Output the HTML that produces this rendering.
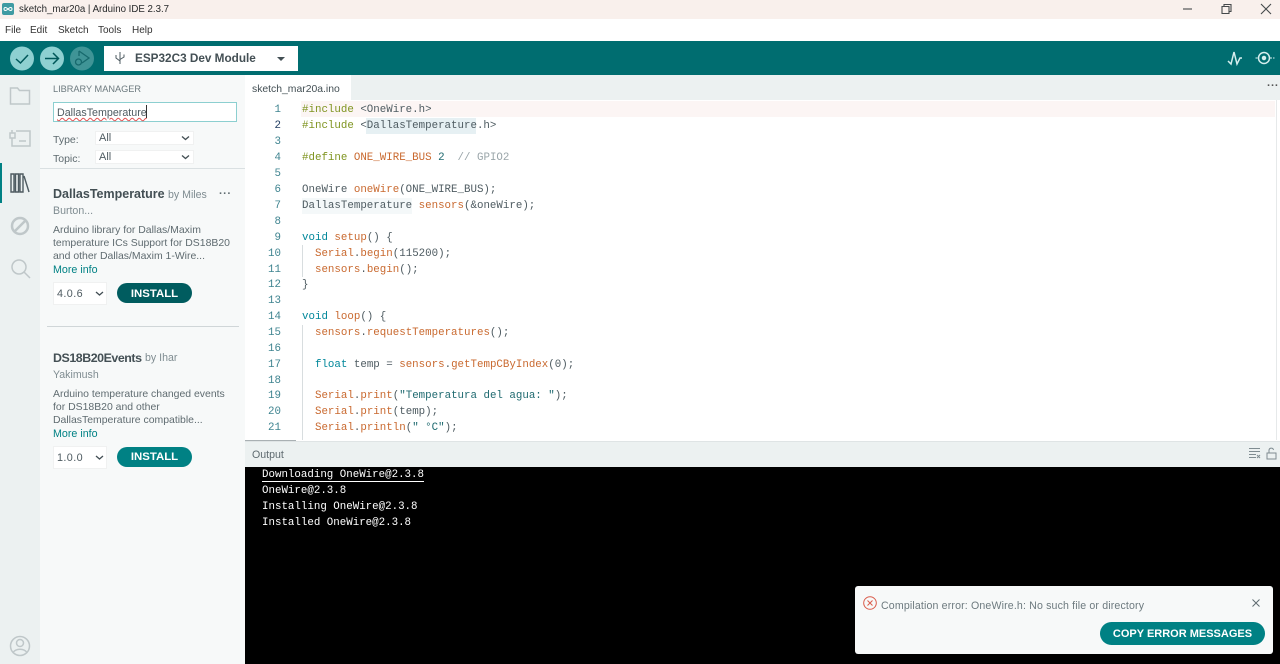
<!DOCTYPE html>
<html><head><meta charset="utf-8"><style>
*{box-sizing:border-box}
html,body{margin:0;padding:0;width:1280px;height:664px;overflow:hidden;background:#fff;font-family:"Liberation Sans",sans-serif}
.a{position:absolute;white-space:nowrap}
.code{position:absolute;left:302px;margin-top:1px;font:10.8px/16px "Liberation Mono",monospace;color:#4e5b61;white-space:pre;height:16px}
.ln{position:absolute;left:250px;margin-top:1px;width:31px;text-align:right;font:10.8px/16px "Liberation Mono",monospace;color:#3f8490;height:16px}
.o{color:#c9692f}.g{color:#7f9420}.t{color:#00879a}.m{color:#5f6f75}.q{color:#1f6a70}
.out{position:absolute;left:262px;margin-top:1px;font:10.8px/16px "Liberation Mono",monospace;color:#fff;white-space:pre}
.sel{position:absolute;background:#fff;border:1px solid #f0f1f1;font-size:11px;color:#4e5b61;padding-left:3px}
.btn{position:absolute;background:#008184;color:#fff;font-weight:bold;text-align:center;border-radius:12px}
.desc{font-size:10.45px;line-height:13.4px;color:#5f6b70}
</style></head><body>
<!-- title -->
<div class="a" style="left:0;top:0;width:1280px;height:19px;background:#f9f0ec"></div>
<svg class="a" style="left:2px;top:3px" width="12" height="12"><rect width="12" height="12" rx="2" fill="#3f9ba3"/><path d="M3.5 4.5a1.5 1.5 0 100 3c1.500 0 3.500-3 5-3a1.500 1.500 0 110 3c-1.500 0-3.500-3-5-3z" fill="none" stroke="#fff"/></svg>
<div class="a" style="left:19px;top:3px;font-size:9.700px;line-height:13px;color:#27292a">sketch_mar20a | Arduino IDE 2.3.7</div>
<svg class="a" style="left:1160px;top:0" width="120" height="19" fill="none" stroke="#45494b" stroke-width="1.100"><path d="M23 9h9"/><path d="M62 6.500h7v7h-7zM64 6.500V4.500h7v7h-2"/><path d="M101 4l10 10M111 4l-10 10"/></svg>
<!-- menu -->
<div class="a" style="left:5px;top:24px;font-size:10px;line-height:13px;color:#333">File</div>
<div class="a" style="left:30px;top:24px;font-size:10px;line-height:13px;color:#333">Edit</div>
<div class="a" style="left:58px;top:24px;font-size:10px;line-height:13px;color:#333">Sketch</div>
<div class="a" style="left:98px;top:24px;font-size:10px;line-height:13px;color:#333">Tools</div>
<div class="a" style="left:132px;top:24px;font-size:10px;line-height:13px;color:#333">Help</div>
<!-- toolbar -->
<div class="a" style="left:0;top:41px;width:1280px;height:34px;background:#006d70"></div>
<svg class="a" style="left:0;top:41px" width="110" height="34">
<circle cx="22" cy="17.500" r="12" fill="#8ed0d1"/><path d="M16 18l4.500 4 7.500-8" fill="none" stroke="#00575a" stroke-width="1.500"/>
<circle cx="52" cy="17.500" r="12" fill="#8ed0d1"/><path d="M45 17.500h13M53 12l5.500 5.500-5.500 5.500" fill="none" stroke="#00575a" stroke-width="1.500"/>
<circle cx="82" cy="17.500" r="12" fill="#3f9496"/><path d="M79 10l10 7-7 5M79 10v5" fill="none" stroke="#17696d" stroke-width="1.300"/><circle cx="78.500" cy="21" r="3" fill="none" stroke="#17696d" stroke-width="1.300"/>
</svg>
<div class="a" style="left:104px;top:46px;width:194px;height:25px;background:#fff"></div>
<svg class="a" style="left:113px;top:51px" width="14" height="15" fill="none" stroke="#4e5b61" stroke-width="1"><path d="M7 1v12M3 4v3l4 3M11 3.500v2.500l-4 2.500"/></svg>
<div class="a" style="left:135px;top:51px;font-size:11.750px;line-height:15px;font-weight:bold;color:#434f54">ESP32C3 Dev Module</div>
<div class="a" style="left:277px;top:57px;width:0;height:0;border-left:4px solid transparent;border-right:4px solid transparent;border-top:4px solid #434f54"></div>
<svg class="a" style="left:1225px;top:47px" width="50" height="22" fill="none" stroke="#d6eeee" stroke-width="1.500"><path d="M3 14l3 3 3-12 3 12 3-6h2"/><circle cx="39" cy="11" r="5.500"/><circle cx="39" cy="11" r="1.500" fill="#d6eeee"/><path d="M30.500 11h2M45 11h2M48 11h1.500" stroke-width="1"/></svg>
<!-- side rail -->
<div class="a" style="left:0;top:75px;width:40px;height:589px;background:#ecf1f1"></div>
<div class="a" style="left:0;top:163px;width:2px;height:40px;background:#008184"></div>
<svg class="a" style="left:0;top:75px" width="40" height="589" fill="none" stroke="#bfc7c9" stroke-width="1.500">
<path d="M10.500 29V13h7l2 2.500h10V29z"/>
<path d="M16 56h14v15H12v-8"/><path d="M12 55v3M10 58h5v5h-5z"/><path d="M19 66h7"/>
<g stroke="#4e5b61" stroke-width="1.400"><path d="M11 99h3v18h-3zM15.500 99h3v18h-3zM20 99h3v18h-3zM24 101l5 16"/></g>
<circle cx="20" cy="151" r="8" stroke-width="2.500"/><path d="M15 156l10-10" stroke-width="2.500"/>
<circle cx="19" cy="192" r="7"/><path d="M24 197l6 6"/>
<circle cx="20" cy="571" r="9.500"/><circle cx="20" cy="568" r="3.500"/><path d="M13 578c2-5 12-5 14 0"/>
</svg>
<!-- library panel -->
<div class="a" style="left:40px;top:75px;width:205px;height:589px;background:#f7f9f9"></div>
<div class="a" style="left:53px;top:83px;font-size:9.200px;line-height:12px;color:#6d7a7f">LIBRARY MANAGER</div>
<div class="a" style="left:53px;top:102px;width:184px;height:20px;background:#fff;border:1px solid #8ccfd0"></div>
<div class="a" style="left:57px;top:106px;font-size:10.700px;line-height:14px;color:#4e5b61;text-decoration:underline wavy #e05050 1px">DallasTemperature</div>
<div class="a" style="left:146px;top:105px;width:1px;height:13px;background:#333"></div>
<div class="a" style="left:53px;top:134px;font-size:10.500px;line-height:13px;color:#5f6b70">Type:</div>
<div class="a" style="left:53px;top:153px;font-size:10.500px;line-height:13px;color:#5f6b70">Topic:</div>
<div class="sel" style="left:95px;top:131px;width:99px;height:14px;line-height:13px">All</div>
<div class="sel" style="left:95px;top:150px;width:99px;height:14px;line-height:13px">All</div>
<svg class="a" style="left:180px;top:134px" width="12" height="30" fill="none" stroke="#434f54" stroke-width="1.300"><path d="M2 2.500l3.500 3 3.500-3M2 21.500l3.500 3 3.500-3"/></svg>
<div class="a" style="left:40px;top:168px;width:205px;height:1px;background:#dae0e2"></div>
<div class="a" style="left:53px;top:186px;font-size:12.500px;line-height:16px;font-weight:bold;color:#434f54">DallasTemperature</div>
<div class="a" style="left:168px;top:189px;font-size:10.600px;line-height:13px;color:#7f8c91">by Miles</div>
<div class="a" style="left:219px;top:188px;font-size:11px;line-height:13px;color:#5f6b70;font-weight:bold;letter-spacing:.5px">···</div>
<div class="a" style="left:53px;top:205px;font-size:10.600px;line-height:13px;color:#7f8c91">Burton...</div>
<div class="a desc" style="left:53px;top:223.500px">Arduino library for Dallas/Maxim<br>temperature ICs Support for DS18B20<br>and other Dallas/Maxim 1-Wire...</div>
<div class="a" style="left:53px;top:264px;font-size:10.700px;line-height:13px;color:#008184">More info</div>
<div class="sel" style="left:53px;top:282px;width:54px;height:23px;line-height:22px;padding-left:3px;font-size:10.800px;letter-spacing:.4px">4.0.6</div>
<svg class="a" style="left:94px;top:290px" width="12" height="8" fill="none" stroke="#434f54" stroke-width="1.300"><path d="M2 2l3.500 3 3.500-3"/></svg>
<div class="btn" style="left:117px;top:283px;width:75px;height:20px;line-height:20px;padding-top:1px;font-size:11.400px;background:#005c5f;border-radius:10px">INSTALL</div>
<div class="a" style="left:47px;top:326px;width:192px;height:1px;background:#d0d6d8"></div>
<div class="a" style="left:53px;top:350px;font-size:12.400px;line-height:16px;font-weight:bold;letter-spacing:-.45px;color:#434f54">DS18B20Events</div>
<div class="a" style="left:145px;top:352px;font-size:10.600px;line-height:13px;color:#7f8c91">by Ihar</div>
<div class="a" style="left:53px;top:369px;font-size:10.600px;line-height:13px;color:#7f8c91">Yakimush</div>
<div class="a desc" style="left:53px;top:387.500px">Arduino temperature changed events<br>for DS18B20 and other<br>DallasTemperature compatible...</div>
<div class="a" style="left:53px;top:428px;font-size:10.700px;line-height:13px;color:#008184">More info</div>
<div class="sel" style="left:53px;top:446px;width:54px;height:23px;line-height:22px;padding-left:3px;font-size:10.800px;letter-spacing:.4px">1.0.0</div>
<svg class="a" style="left:94px;top:454px" width="12" height="8" fill="none" stroke="#434f54" stroke-width="1.300"><path d="M2 2l3.500 3 3.500-3"/></svg>
<div class="btn" style="left:117px;top:447px;width:75px;height:20px;line-height:20px;font-size:11.400px;border-radius:10px">INSTALL</div>
<!-- tab bar -->
<div class="a" style="left:245px;top:75px;width:1035px;height:25px;background:#ecf1f1"></div>
<div class="a" style="left:245px;top:75px;width:106px;height:25px;background:#fff"></div>
<div class="a" style="left:252px;top:83px;font-size:10.400px;line-height:13px;color:#434f54">sketch_mar20a.ino</div>
<div class="a" style="left:1267px;top:81px;font-size:11px;line-height:11px;color:#555;font-weight:bold;letter-spacing:.3px">···</div>
<!-- editor -->
<div class="a" style="left:301px;top:101px;width:974px;height:16px;background:#fcf5f4"></div>
<div class="a" style="left:1276px;top:100px;width:1px;height:340px;background:#e6e9ea"></div>
<div class="a" style="left:366px;top:118px;width:110px;height:16px;background:#e6f0f3"></div>
<div class="a" style="left:302px;top:198px;width:110px;height:16px;background:#f4f8f9"></div>
<div class="a" style="left:302px;top:245px;width:1px;height:32px;background:#d8dddf"></div>
<div class="a" style="left:302px;top:325px;width:1px;height:115px;background:#d8dddf"></div>
<div class="ln" style="top:101px">1</div><div class="code" style="top:101px"><span class="g">#include</span> &lt;OneWire.h&gt;</div>
<div class="ln" style="top:117px;color:#1e3a5f">2</div><div class="code" style="top:117px"><span class="g">#include</span> &lt;DallasTemperature.h&gt;</div>
<div class="ln" style="top:133px">3</div>
<div class="ln" style="top:149px">4</div><div class="code" style="top:149px"><span class="g">#define</span> <span class="o">ONE_WIRE_BUS</span> <span class="q">2</span>  <span style="color:#9aa5a9">// GPIO2</span></div>
<div class="ln" style="top:165px">5</div>
<div class="ln" style="top:181px">6</div><div class="code" style="top:181px">OneWire <span class="o">oneWire</span>(ONE_WIRE_BUS);</div>
<div class="ln" style="top:197px">7</div><div class="code" style="top:197px">DallasTemperature <span class="o">sensors</span>(&amp;oneWire);</div>
<div class="ln" style="top:213px">8</div>
<div class="ln" style="top:229px">9</div><div class="code" style="top:229px"><span class="t">void</span> <span class="o">setup</span>() {</div>
<div class="ln" style="top:245px">10</div><div class="code" style="top:245px">  <span class="o">Serial</span>.<span class="o">begin</span>(115200);</div>
<div class="ln" style="top:261px">11</div><div class="code" style="top:261px">  <span class="o">sensors</span>.<span class="o">begin</span>();</div>
<div class="ln" style="top:276px">12</div><div class="code" style="top:276px">}</div>
<div class="ln" style="top:292px">13</div>
<div class="ln" style="top:308px">14</div><div class="code" style="top:308px"><span class="t">void</span> <span class="o">loop</span>() {</div>
<div class="ln" style="top:324px">15</div><div class="code" style="top:324px">  <span class="o">sensors</span>.<span class="o">requestTemperatures</span>();</div>
<div class="ln" style="top:340px">16</div>
<div class="ln" style="top:356px">17</div><div class="code" style="top:356px">  <span class="t">float</span> temp = <span class="o">sensors</span>.<span class="o">getTempCByIndex</span>(0);</div>
<div class="ln" style="top:372px">18</div>
<div class="ln" style="top:387px">19</div><div class="code" style="top:387px">  <span class="o">Serial</span>.<span class="o">print</span>(<span class="q">"Temperatura del agua: "</span>);</div>
<div class="ln" style="top:403px">20</div><div class="code" style="top:403px">  <span class="o">Serial</span>.<span class="o">print</span>(temp);</div>
<div class="ln" style="top:419px">21</div><div class="code" style="top:419px">  <span class="o">Serial</span>.<span class="o">println</span>(<span class="q">" °C"</span>);</div>
<!-- output header -->
<div class="a" style="left:245px;top:441px;width:1035px;height:26px;background:#ecf1f1;border-top:1px solid #dfe4e5"></div>
<div class="a" style="left:245px;top:440px;width:51px;height:1px;background:#a9b0b3"></div>
<div class="a" style="left:252px;top:449px;font-size:10.600px;line-height:13px;color:#5f6b70">Output</div>
<svg class="a" style="left:1248px;top:446px" width="30" height="14" fill="none" stroke="#7f8c91" stroke-width="1"><path d="M1 2.500h11M1 5.500h11M1 8.500h7M1 11.500h7M9 9l3 3M12 9l-3 3"/><path d="M19 7h9v6h-9zM21 7V4a2.300 2.300 0 014.500 0"/></svg>
<!-- output -->
<div class="a" style="left:245px;top:467px;width:1035px;height:197px;background:#000"></div>
<div class="out" style="top:466px;border-bottom:1px solid #fff;height:15px">Downloading OneWire@2.3.8</div>
<div class="out" style="top:482px">OneWire@2.3.8</div>
<div class="out" style="top:498px">Installing OneWire@2.3.8</div>
<div class="out" style="top:514px">Installed OneWire@2.3.8</div>
<!-- toast -->
<div class="a" style="left:855px;top:586px;width:418px;height:68px;background:#f7f9f9;border-radius:3px"></div>
<svg class="a" style="left:863px;top:596px" width="14" height="14" fill="none" stroke="#da5b4a" stroke-width="1"><circle cx="7" cy="7" r="6.300"/><path d="M4.500 4.500l5 5M9.500 4.500l-5 5"/></svg>
<div class="a" style="left:881px;top:600px;font-size:10.600px;line-height:13px;color:#6d7a7f;letter-spacing:.15px">Compilation error: OneWire.h: No such file or directory</div>
<svg class="a" style="left:1251px;top:598px" width="10" height="10" fill="none" stroke="#5f6b70" stroke-width="1"><path d="M1.500 1.500l7 7M8.500 1.500l-7 7"/></svg>
<div class="btn" style="left:1100px;top:622px;width:165px;height:23px;line-height:23px;padding-top:1px;font-size:11px">COPY ERROR MESSAGES</div>
</body></html>
